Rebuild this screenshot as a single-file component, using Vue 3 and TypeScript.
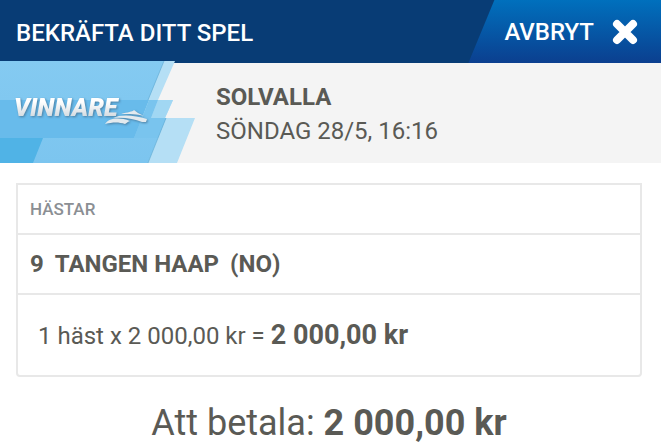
<script setup lang="ts">
interface Horse {
  number: number
  name: string
  country: string
}

const track = 'SOLVALLA'
const startTime = 'SÖNDAG 28/5, 16:16'
const horses: Horse[] = [{ number: 9, name: 'TANGEN HAAP', country: '(NO)' }]
const price = '2 000,00 kr'
</script>

<template>
  <main class="slip">
    <header class="bar">
      <h1 class="title">BEKRÄFTA DITT SPEL</h1>
      <button class="cancel" type="button">
        <span>AVBRYT</span>
        <svg class="cross" viewBox="0 0 26 26" aria-hidden="true">
          <path d="M5 5 L21 21 M21 5 L5 21" />
        </svg>
      </button>
    </header>

    <section class="race">
      <svg class="banner" viewBox="0 0 200 102" role="img" aria-label="Vinnare">
        <defs>
          <linearGradient id="sky" x1="0" y1="0" x2="0" y2="1">
            <stop offset="0" stop-color="#84caf1" />
            <stop offset="1" stop-color="#7cc5ef" />
          </linearGradient>
          <linearGradient id="silver" x1="0" y1="0" x2="0" y2="1">
            <stop offset="0.3" stop-color="#ffffff" />
            <stop offset="0.8" stop-color="#d5dce1" />
          </linearGradient>
        </defs>
        <path d="M140 0 H175 L158 39 H173 L165 57 H195 L177 102 H120 Z" fill="#b5dff5" />
        <path d="M0 0 H164 L141 57 H166 L148 102 H0 Z" fill="url(#sky)" />
        <path d="M158 39 H173 L165 57 H151 Z" fill="#a1d7f3" />
        <path d="M0 39 H149 L134 77 H0 Z" fill="#68bbeb" />
        <path d="M149 39 H158 L151 57 H166 L158 77 H134 Z" fill="#79c4ee" />
        <path d="M0 77 H43 L33 102 H0 Z" fill="#50b3e6" />
        <path d="M164 0 L148 39 M166 57 L148 102" stroke="#5fa9d2" stroke-width="0.6" fill="none" />
        <g class="mark-shadow">
          <text x="14" y="55" class="mark">VINNARE</text>
          <path class="swoosh" d="M105 63 C109 57 119 56 130 60 C127 61 127 62 125 63 C119 61 113 61 105 63 Z" />
          <path class="swoosh" d="M113 57 C121 53 134 54 147 58 L146 61 L142 61 C134 58 125 56 113 57 Z" />
          <path class="swoosh" d="M121 53 C128 51 132 51 134 49 L138 52 L144 55 C136 53 130 53 121 53 Z" />
        </g>
      </svg>
      <div class="details">
        <h2 class="track">{{ track }}</h2>
        <p class="time">{{ startTime }}</p>
      </div>
    </section>

    <section class="content">
      <div class="card">
        <h3 class="label">HÄSTAR</h3>
        <ul class="horses">
          <li v-for="horse in horses" :key="horse.number" class="horse">
            <span>{{ horse.number }}</span>
            <span>{{ horse.name }}</span>
            <span>{{ horse.country }}</span>
          </li>
        </ul>
        <p class="sum">{{ horses.length }} häst x {{ price }} = <strong>{{ price }}</strong></p>
      </div>
      <p class="total">Att betala: <strong>{{ price }}</strong></p>
    </section>
  </main>
</template>

<style>
body {
  margin: 0;
  background: #fff;
}
</style>

<style scoped>
.slip {
  color: #5a5a55;
  font-family: Roboto, "Noto Sans", sans-serif;
  font-size: 24px;
  line-height: 34px;
}

h1,
h2,
h3,
p,
ul {
  margin: 0;
  padding: 0;
  font-size: inherit;
}

.bar {
  display: flex;
  justify-content: space-between;
  height: 63px;
  background: #083c75;
  color: #fff;
}

.title {
  padding: 16px;
  font-weight: 500;
}

.cancel {
  display: flex;
  align-items: center;
  gap: 18px;
  padding: 0 23px 0 36px;
  border: 0;
  background: linear-gradient(#0070bd, #0b3f8f);
  clip-path: polygon(26px 0, 100% 0, 100% 100%, 0 100%);
  color: #fff;
  font: inherit;
  font-weight: 500;
  cursor: pointer;
}

.cross {
  width: 26px;
  height: 26px;
  fill: none;
  stroke: #fff;
  stroke-width: 8;
  stroke-linecap: round;
}

.race {
  display: flex;
  gap: 16px;
  height: 100px;
  background: #f4f4f4;
}

.banner {
  flex: none;
  width: 200px;
  height: 102px;
  margin-top: -2px;
}

.mark {
  font-size: 25px;
  font-style: italic;
  font-weight: 900;
}

.mark-shadow {
  fill: url(#silver);
  filter: drop-shadow(1px 1px 1px #4b7fa3);
}

.swoosh {
  fill: #e3eaee;
}

.details {
  padding-top: 17px;
}

.track {
  font-weight: 700;
}

.content {
  padding: 20px 19px 0 16px;
}

.card {
  border: 2px solid #e8e8e8;
  border-radius: 0 0 4px 4px;
}

.label {
  padding: 7px 12px;
  border-bottom: 2px solid #e8e8e8;
  color: #8b8f94;
  font-size: 17px;
  font-weight: 500;
}

.horses {
  list-style: none;
}

.horse {
  display: flex;
  gap: 11px;
  padding: 12px;
  border-bottom: 2px solid #e8e8e8;
  font-weight: 700;
}

.sum {
  padding: 23px 20px 22px;
}

.sum strong {
  font-size: 27px;
}

.total {
  padding-top: 24px;
  font-size: 36px;
  line-height: 44px;
  text-align: center;
}
</style>
